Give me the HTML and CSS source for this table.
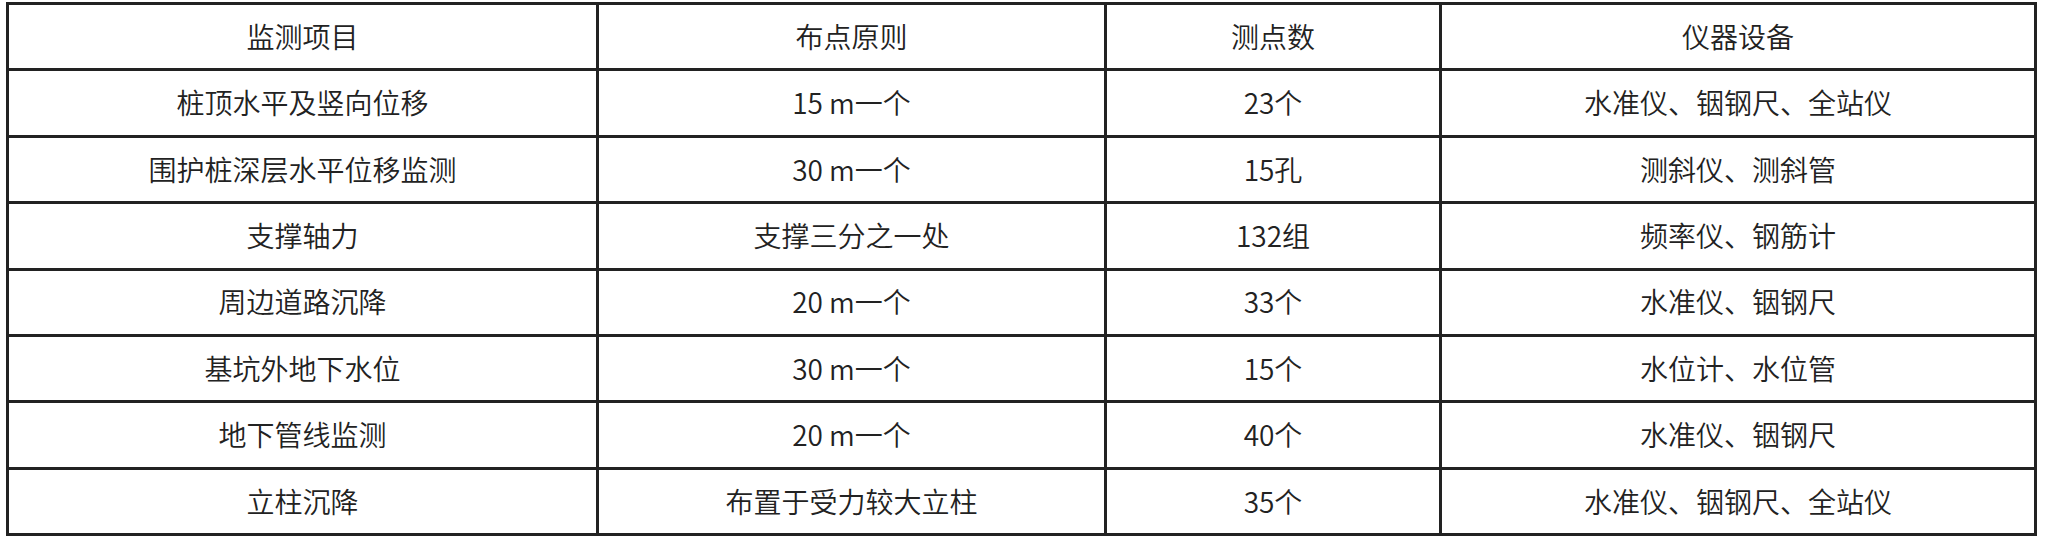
FILE: index.html
```html
<!DOCTYPE html>
<html lang="zh">
<head>
<meta charset="utf-8">
<link rel="stylesheet" href="styles.css">
</head>
<body>
<table class="grid">
  <colgroup>
    <col class="c1"><col class="c2"><col class="c3"><col class="c4">
  </colgroup>
  <tr><td>监测项目</td><td>布点原则</td><td>测点数</td><td>仪器设备</td></tr>
  <tr><td>桩顶水平及竖向位移</td><td>15 m一个</td><td>23个</td><td>水准仪、铟钢尺、全站仪</td></tr>
  <tr><td>围护桩深层水平位移监测</td><td>30 m一个</td><td>15孔</td><td>测斜仪、测斜管</td></tr>
  <tr><td>支撑轴力</td><td>支撑三分之一处</td><td>132组</td><td>频率仪、钢筋计</td></tr>
  <tr><td>周边道路沉降</td><td>20 m一个</td><td>33个</td><td>水准仪、铟钢尺</td></tr>
  <tr><td>基坑外地下水位</td><td>30 m一个</td><td>15个</td><td>水位计、水位管</td></tr>
  <tr><td>地下管线监测</td><td>20 m一个</td><td>40个</td><td>水准仪、铟钢尺</td></tr>
  <tr><td>立柱沉降</td><td>布置于受力较大立柱</td><td>35个</td><td>水准仪、铟钢尺、全站仪</td></tr>
</table>
</body>
</html>
```
FILE: styles.css
```css
html, body {
  margin: 0;
  padding: 0;
  background: #ffffff;
}
body {
  padding: 2px 0 0 6px;
  font-family: "Noto Sans CJK SC", "Noto Sans", sans-serif;
  color: #222222;
}
.grid {
  border-collapse: collapse;
  table-layout: fixed;
  width: 2031px;
  height: 534px;
  border: 3px solid #222222;
}
.c1 { width: 590px; }
.c2 { width: 508px; }
.c3 { width: 335px; }
.c4 { width: 595px; }
.grid td {
  border: 3px solid #222222;
  text-align: center;
  vertical-align: middle;
  font-size: 28px;
  font-weight: 350;
  line-height: 1.2;
  padding: 0;
  height: 63px;
}
```
